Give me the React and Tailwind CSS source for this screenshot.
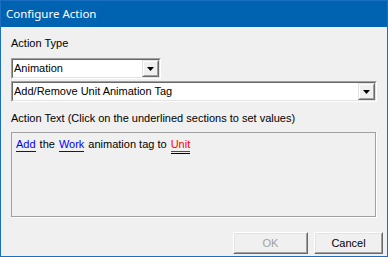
function Arrow() {
  return (
    <svg width="7" height="4" viewBox="0 0 7 4" className="block">
      <path d="M0 0H7L3.5 4Z" fill="#000" />
    </svg>
  );
}

function Combo({ value, width }) {
  return (
    <div
      className={`${width} h-[21px] border border-t-[#a0a0a0] border-l-[#a0a0a0] border-r-white border-b-white`}
    >
      <div className="h-full flex border border-t-[#696969] border-l-[#696969] border-r-[#e3e3e3] border-b-[#e3e3e3] bg-white">
        <div className="flex-1 flex items-center pl-[1px] text-[11px] leading-[13px] text-black">
          {value}
        </div>
        <div className="w-[17px] h-full border border-t-[#e3e3e3] border-l-[#e3e3e3] border-r-[#696969] border-b-[#696969] bg-[#f0f0f0]">
          <div className="h-full border border-t-white border-l-white border-r-[#a0a0a0] border-b-[#a0a0a0] flex items-center justify-center">
            <Arrow />
          </div>
        </div>
      </div>
    </div>
  );
}

function Button({ label, width, disabled }) {
  return (
    <div
      className={`${width} h-[22px] border border-t-white border-l-white border-r-[#696969] border-b-[#696969] bg-[#f0f0f0]`}
    >
      <div
        className={`h-full flex items-center justify-center border border-t-[#e3e3e3] border-l-[#e3e3e3] border-r-[#a0a0a0] border-b-[#a0a0a0] text-[11px] ${
          disabled ? "text-[#a0a0a0]" : "text-black"
        }`}
      >
        {label}
      </div>
    </div>
  );
}

export default function App() {
  return (
    <div
      className="w-[388px] h-[257px] flex flex-col border border-[#1a6fc0] bg-[#f0f0f0] overflow-hidden"
      style={{ fontFamily: '"Liberation Sans", Arial, sans-serif' }}
    >
      <div className="h-[26px] shrink-0 bg-[#0063b1] flex items-center pl-[5px]">
        <span className="text-white text-[11.5px]" style={{ fontFamily: '"Noto Sans", "Open Sans", sans-serif' }}>
          Configure Action
        </span>
      </div>

      <div className="flex-1 flex flex-col pl-[10px] pr-[4px] text-[11px] leading-[13px] text-black">
        <div className="mt-[10px]">Action Type</div>
        <div className="mt-[8px]">
          <Combo value="Animation" width="w-[150px]" />
        </div>
        <div className="mt-[2px]">
          <Combo value="Add/Remove Unit Animation Tag" width="w-[366px]" />
        </div>
        <div className="mt-[10px]">Action Text (Click on the underlined sections to set values)</div>
        <div className="mt-[7px] w-[365px] h-[85px] border border-[#a0a0a0] shadow-[1px_1px_0_#ffffff] px-[4px] pt-[5px]">
          <div className="flex items-start gap-[4px] leading-[13px]">
            <span className="inline-block text-[#0000ff] border-b border-[#0000ff]">Add</span>
            <span>the</span>
            <span className="inline-block text-[#0000ff] border-b border-[#0000ff]">Work</span>
            <span>animation tag to</span>
            <span className="inline-block border-b border-black pb-[1px]">
              <span className="block text-[#ff0000] border-b border-[#ff0000]">Unit</span>
            </span>
          </div>
        </div>
        <div className="mt-auto mb-[2px] flex justify-end gap-[6px]">
          <Button label="OK" width="w-[75px]" disabled />
          <Button label="Cancel" width="w-[69px]" />
        </div>
      </div>
    </div>
  );
}
